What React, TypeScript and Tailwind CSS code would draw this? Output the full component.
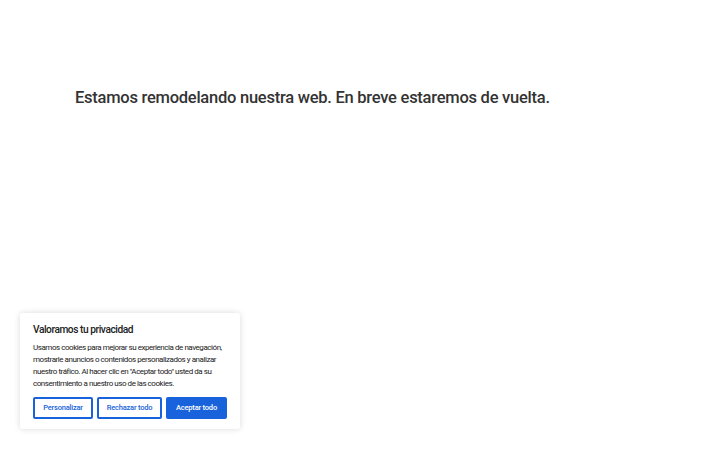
export default function App() {
  return (
    <div className="relative w-[720px] h-[450px] bg-white overflow-hidden" style={{ fontFamily: "Roboto, 'Liberation Sans', sans-serif" }}>
      <div className="pt-[86px] pl-[75px]">
        <h1 className="text-[16.5px] leading-[24px] font-medium tracking-[-0.25px] text-[#333333]">Estamos remodelando nuestra web. En breve estaremos de vuelta.</h1>
      </div>
      <div className="absolute left-[20px] top-[313px] w-[220px] bg-white rounded-[3px] shadow-[0_0_6px_rgba(0,0,0,0.15)] px-[13px] pt-[10px] pb-[10px]">
        <div className="text-[10.2px] leading-[14px] font-medium tracking-[-0.45px] text-[#212121] mb-[5px]">Valoramos tu privacidad</div>
        <p className="text-[8px] leading-[12px] tracking-[-0.45px] text-[#212121]">Usamos cookies para mejorar su experiencia de navegación, mostrarle anuncios o contenidos personalizados y analizar nuestro tráfico. Al hacer clic en "Aceptar todo" usted da su consentimiento a nuestro uso de las cookies.</p>
        <div className="flex gap-[4px] mt-[7px]">
          <button className="w-[60px] h-[22px] border-2 border-[#1863dc] rounded-[2px] text-[7.5px] font-medium tracking-[-0.2px] text-[#1863dc] bg-white">Personalizar</button>
          <button className="w-[65px] h-[22px] border-2 border-[#1863dc] rounded-[2px] text-[7.5px] font-medium tracking-[-0.2px] text-[#1863dc] bg-white">Rechazar todo</button>
          <button className="w-[61px] h-[22px] border-2 border-[#1863dc] rounded-[2px] text-[7.5px] font-medium tracking-[-0.2px] text-white bg-[#1863dc]">Aceptar todo</button>
        </div>
      </div>
    </div>
  );
}
